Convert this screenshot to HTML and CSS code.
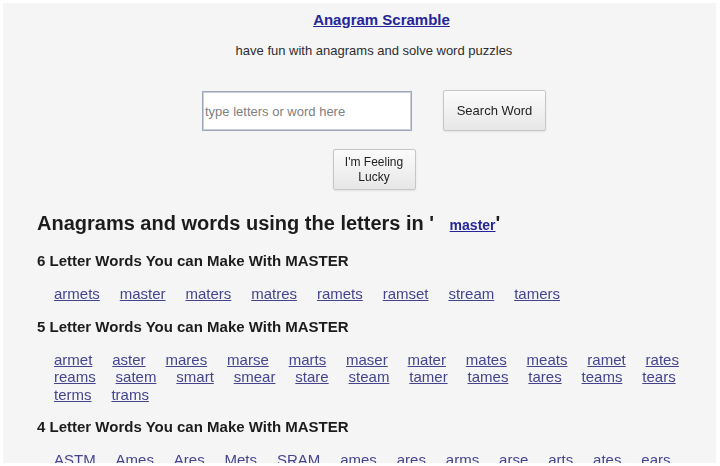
FILE: index.html
```html
<!DOCTYPE html>
<html lang="en">
<head>
<meta charset="utf-8">
<title>Anagram Scramble</title>
<link rel="stylesheet" href="styles.css">
</head>
<body>
<div class="page">
  <header class="header">
    <div class="title"><a href="#">Anagram Scramble</a></div>
    <p class="subtitle">have fun with anagrams and solve word puzzles</p>
    <form class="search">
      <input class="search-input" type="text" placeholder="type letters or word here" autofocus>
      <button class="btn btn-search" type="button">Search Word</button>
    </form>
    <div class="lucky-row">
      <button class="btn btn-lucky" type="button">I'm Feeling<br>Lucky</button>
    </div>
  </header>

  <main class="results">
    <h1 class="results-title">Anagrams and words using the letters in ' <a class="query" href="#">master</a>'</h1>

    <h3 class="group-title">6 Letter Words You can Make With MASTER</h3>
    <div class="words">
      <a href="#">armets</a><a href="#">master</a><a href="#">maters</a><a href="#">matres</a><a href="#">ramets</a><a href="#">ramset</a><a href="#">stream</a><a href="#">tamers</a>
    </div>

    <h3 class="group-title">5 Letter Words You can Make With MASTER</h3>
    <div class="words">
      <a href="#">armet</a><a href="#">aster</a><a href="#">mares</a><a href="#">marse</a><a href="#">marts</a><a href="#">maser</a><a href="#">mater</a><a href="#">mates</a><a href="#">meats</a><a href="#">ramet</a><a href="#">rates</a><a href="#">reams</a><a href="#">satem</a><a href="#">smart</a><a href="#">smear</a><a href="#">stare</a><a href="#">steam</a><a href="#">tamer</a><a href="#">tames</a><a href="#">tares</a><a href="#">teams</a><a href="#">tears</a><a href="#">terms</a><a href="#">trams</a>
    </div>

    <h3 class="group-title">4 Letter Words You can Make With MASTER</h3>
    <div class="words">
      <a href="#">ASTM</a><a href="#">Ames</a><a href="#">Ares</a><a href="#">Mets</a><a href="#">SRAM</a><a href="#">ames</a><a href="#">ares</a><a href="#">arms</a><a href="#">arse</a><a href="#">arts</a><a href="#">ates</a><a href="#">ears</a><a href="#">east</a><a href="#">eats</a><a href="#">erst</a><a href="#">etas</a><a href="#">mare</a><a href="#">mars</a><a href="#">mart</a><a href="#">mast</a><a href="#">mate</a><a href="#">mats</a><a href="#">meat</a><a href="#">mesa</a>
    </div>
  </main>
</div>
</body>
</html>
```

FILE: styles.css
```css
html, body {
  margin: 0;
  padding: 0;
  background: #ffffff;
}

body {
  font-family: "Liberation Sans", Arial, sans-serif;
  color: #1f1f1f;
}

.page {
  margin: 3px 4px 0 3px;
  height: 460px;
  overflow: hidden;
  background: #f5f5f6;
  padding: 8px 5px 0 34px;
  box-sizing: border-box;
}

.header {
  display: flex;
  flex-direction: column;
  align-items: center;
}

.title {
  font-size: 15px;
  font-weight: bold;
  line-height: 18px;
  padding-left: 15px;
}

.title a {
  color: #25259a;
  text-decoration: underline;
}

.subtitle {
  margin: 14px 0 0;
  font-size: 13px;
  line-height: 16px;
  color: #2e2e2e;
}

.search {
  margin: 31px 0 0;
  display: flex;
  align-items: flex-end;
  gap: 31px;
}

.search-input {
  box-sizing: border-box;
  width: 210px;
  height: 40px;
  margin: 0;
  padding: 0 2px;
  border: 1px solid #9ea7b8;
  box-shadow: inset 0 0 0 1px #c9ced8;
  background: #ffffff;
  font-family: "Liberation Sans", Arial, sans-serif;
  font-size: 13px;
  color: #333;
  outline: none;
  caret-color: #333;
}

.search-input::placeholder {
  color: #808080;
}

.btn {
  box-sizing: border-box;
  margin: 0;
  border: 1px solid #c6c6c6;
  border-radius: 2px;
  background: linear-gradient(#fbfbfb, #e7e7e7);
  box-shadow: 0 1px 2px rgba(0, 0, 0, 0.08);
  font-family: "Liberation Sans", Arial, sans-serif;
  color: #222;
  cursor: pointer;
}

.btn-search {
  width: 103px;
  height: 41px;
  font-size: 13px;
}

.lucky-row {
  margin-top: 18px;
}

.btn-lucky {
  width: 83px;
  height: 41px;
  font-size: 12px;
  line-height: 15px;
  padding: 0;
}

.results-title {
  margin: 21px 0 0;
  font-size: 20px;
  line-height: 24px;
  font-weight: bold;
  color: #1c1c1c;
}

.query {
  margin-left: 10px;
  font-size: 14px;
  color: #25259a;
}

.group-title {
  margin: 15px 0 0;
  font-size: 15px;
  line-height: 18px;
  font-weight: bold;
  color: #1c1c1c;
}

.words {
  margin: 15px 0 0 17px;
  width: 636px;
  display: flex;
  flex-wrap: wrap;
  column-gap: 19.9px;
  font-size: 15px;
  line-height: 17.5px;
}

.words + .group-title {
  margin-top: 15px;
}

.words a {
  color: #45458f;
  text-decoration: underline;
}
```
